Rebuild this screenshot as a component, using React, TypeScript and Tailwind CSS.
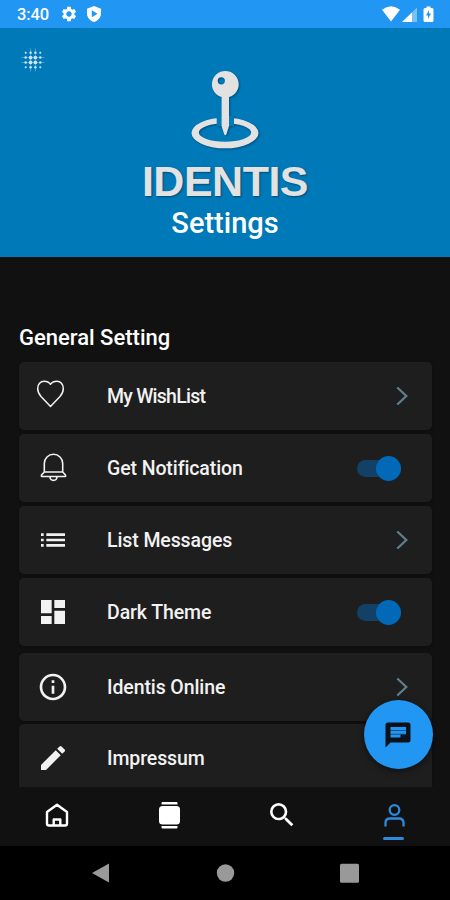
import type { ReactNode } from "react";
import { MdCreate, MdDashboard, MdInfoOutline, MdList, MdSearch, MdSettings } from "react-icons/md";

function StatusBar() {
  return (
    <div className="flex h-7 shrink-0 items-center bg-[#2196f3] pl-[17px] pr-4 text-white">
      <span className="mt-0.5 w-8 text-[16.5px] font-medium leading-none tracking-[-0.1px]">3:40</span>
      <MdSettings className="ml-[11px] size-[18px]" />
      <svg className="ml-[7px] size-[18px]" viewBox="0 0 18 18" fill="currentColor">
        <path fillRule="evenodd" d="M9 1 2 3.700v4.800c0 4 3 7.300 7 8.500 4-1.200 7-4.500 7-8.500V3.700zM6.800 5.300v7L12.500 8.800z" />
      </svg>
      <svg className="ml-auto h-[18px] w-[52px]" viewBox="0 0 52 18" fill="currentColor">
        <path d="M0 4.800Q9-2.500 18 4.800L9 16.500z" />
        <path d="M20 17 35 2.500V17z" opacity=".4" />
        <path d="M20 17 30 7.500V17z" />
        <path fillRule="evenodd" d="M44.500 1.500h4V3h1.500q1.500 0 1.500 1.500v11q0 1.500-1.500 1.500h-7q-1.500 0-1.500-1.500v-11Q41.500 3 43 3h1.500zM47 5l-3 5.500h2V14l3-5.500h-2z" />
      </svg>
    </div>
  );
}

// [x, y, radius] of each dot in the round grid
const dots = [
  [4.5, 4.5, 1], [9.2, 4.5, 1.2], [13.8, 4.5, 1.2], [18.5, 4.5, 1],
  [4.5, 9.2, 1.2], [9.2, 9.2, 1.8], [13.8, 9.2, 1.8], [18.5, 9.2, 1.2],
  [4.5, 13.8, 1.2], [9.2, 13.8, 1.8], [13.8, 13.8, 1.8], [18.5, 13.8, 1.2],
  [4.5, 18.5, 1], [9.2, 18.5, 1.2], [13.8, 18.5, 1.2], [18.5, 18.5, 1],
];

function DotGrid() {
  return (
    <svg className="absolute left-[21px] top-5 size-6" viewBox="0 0 23 23" fill="#ffffff" opacity=".8">
      <path d="M9.200 .5v22M13.800 .5v22M.5 9.200h22M.5 13.800h22" stroke="#ffffff" strokeWidth="1" opacity=".35" />
      {dots.map(([x, y, r]) => (
        <circle key={`${x}-${y}`} cx={x} cy={y} r={r} />
      ))}
    </svg>
  );
}

function Logo() {
  return (
    <svg className="h-20 w-[68px] drop-shadow-[1px_1px_1px_rgba(0,0,0,0.35)]" viewBox="0 0 68 80" fill="#e2e2e2">
      <path fillRule="evenodd" d="M.5 63a33.500 15.300 0 1 0 67 0a33.500 15.300 0 1 0-67 0M7.800 62.500a26.200 9.300 0 1 0 52.400 0a26.200 9.300 0 1 0-52.400 0" />
      <path d="M25.700 46h17.300v10H25.700z" fill="#0079b9" />
      <path fillRule="evenodd" d="M34.300 1a13.300 13.300 0 0 1 3.700 26.100V56l-2.500 8q-1.200 2.500-2.400 0L30.600 56V27.100A13.300 13.300 0 0 1 34.300 1M30.300 7.200a3.600 3.600 0 1 0 0 7.200 3.600 3.600 0 0 0 0-7.200" />
    </svg>
  );
}

function HeartIcon() {
  return (
    <svg className="-ml-[3px] -mt-1 size-8" viewBox="0 0 32 32" fill="none" stroke="currentColor" strokeWidth="1.500" strokeLinejoin="round">
      <path d="M16.500 28.500L7 18.500C4.800 16 3.700 13.500 3.700 10.500C3.700 6.200 6.500 3.300 10 3.300C13 3.300 15.300 4.500 16.500 6.300C17.700 4.500 20 3.300 23 3.300C26.500 3.300 29.300 6.200 29.300 10.500C29.300 13.500 28.200 16 26 18.500Z" />
    </svg>
  );
}

function BellIcon() {
  return (
    <svg className="size-8" viewBox="0 0 32 32" fill="none" stroke="currentColor" strokeWidth="1.600" strokeLinejoin="round">
      <path d="M7.300 20V11.500a9.200 9.200 0 0 1 18.400 0V20M7.300 20L4.500 23v1.500h24V23l-2.800-3zM13 25c.3 4.500 6.700 4.500 7 0" />
    </svg>
  );
}

function Chevron() {
  return (
    <svg className="h-5 w-3" viewBox="0 0 12 20" fill="none" stroke="#607d8b" strokeWidth="2.300">
      <path d="m1.300 1.500 9 8.500-9 8.500" />
    </svg>
  );
}

function Toggle() {
  return (
    <div className="mr-[7px] flex h-[17px] w-11 items-center justify-end rounded-full bg-[#124067]">
      <span className="size-[25px] shrink-0 rounded-full bg-[#0269b9]" />
    </div>
  );
}

function Row({ icon, label, right, className = "" }: { icon: ReactNode; label: ReactNode; right?: ReactNode; className?: string }) {
  return (
    <div className={`flex h-[68px] shrink-0 items-center rounded-[5px] bg-[#1e1e1e] pl-[18px] pr-6 tracking-[-0.1px] text-[#f2f2f2] shadow-[0_1px_3px_rgba(0,0,0,0.3)] ${className}`}>
      <div className="flex w-[70px] items-center">{icon}</div>
      <span className="flex-1 pt-0.5 text-[19.500px] font-medium">{label}</span>
      {right}
    </div>
  );
}

export default function App() {
  return (
    <div className="relative flex h-[900px] w-[450px] flex-col overflow-hidden bg-[#111111] font-['Roboto',sans-serif]">
      <StatusBar />

      <header className="relative flex h-[229px] shrink-0 flex-col items-center bg-[#0079b9] pt-[42px]">
        <DotGrid />
        <Logo />
        <div className="mt-1.5 font-['Liberation_Sans',sans-serif] text-[43px] font-bold leading-[50px] tracking-[-0.5px] text-[#e2e2e2] [text-shadow:1px_1px_2px_rgba(0,0,0,0.4)]">
          IDENTIS
        </div>
        <h1 className="text-[29px] font-medium leading-[34px] text-white">Settings</h1>
      </header>

      <main className="flex h-[530px] shrink-0 flex-col overflow-hidden pl-[19px] pr-[18px] pt-[67px]">
        <h2 className="mb-[10px] text-[22px] font-medium leading-7 text-white">General Setting</h2>
        <Row icon={<HeartIcon />} label={<span className="tracking-[-0.75px]">My WishList</span>} right={<Chevron />} />
        <Row className="mt-1" icon={<BellIcon />} label="Get Notification" right={<Toggle />} />
        <Row className="mt-1" icon={<MdList className="size-8" />} label="List Messages" right={<Chevron />} />
        <Row className="mt-1" icon={<MdDashboard className="size-8" />} label="Dark Theme" right={<Toggle />} />
        <Row className="mt-[7px]" icon={<MdInfoOutline className="size-8" />} label="Identis Online" right={<Chevron />} />
        <Row className="mt-[3px]" icon={<MdCreate className="size-8" />} label="Impressum" />
      </main>

      <nav className="grid h-[59px] shrink-0 grid-cols-4 justify-items-center pt-3 text-white">
        <svg className="size-8" viewBox="0 0 32 32" fill="none" stroke="currentColor" strokeWidth="2.400" strokeLinejoin="round">
          <path d="M7 13 17 5.800 27 13V24.500q0 2-2 2H9q-2 0-2-2zM13.700 26.500v-6h6.600v6" />
        </svg>
        <svg className="size-8" viewBox="0 0 32 32" fill="currentColor">
          <rect x="6" y="7" width="21" height="18.500" rx="3.500" />
          <path d="M9.500 3h14q1 0 1 1V5.500h-16V4q0-1 1-1M8.500 27h16V28.500q0 1-1 1h-14q-1 0-1-1z" />
        </svg>
        <MdSearch className="ml-0.5 size-8" />
        <div className="flex flex-col items-center text-[#2c8ade]">
          <svg className="size-8" viewBox="0 0 32 32" fill="none" stroke="currentColor" strokeWidth="2.300">
            <circle cx="16.500" cy="11" r="4.800" />
            <path d="M7.500 27.500v-3.500q0-4.500 4.500-4.500h9q4.500 0 4.500 4.500V27.500" />
          </svg>
          <span className="mt-[6px] h-[3px] w-[21px] rounded-full bg-current" />
        </div>
      </nav>

      <div className="flex-1 bg-black pt-[17px]">
        <svg className="h-5 w-full" viewBox="0 0 450 20" fill="#999999">
          <path d="M92 10 109 .5v19z" />
          <circle cx="225.500" cy="10" r="8.700" />
          <rect x="340" y=".7" width="19" height="19" rx="1.500" />
        </svg>
      </div>

      <button className="absolute bottom-[131px] right-[17.5px] flex size-[69px] items-center justify-center rounded-full bg-[#2196f3] shadow-[0_2px_6px_rgba(0,0,0,0.5)]">
        <svg className="size-[30px] text-[#0b121a]" viewBox="0 0 24 24" fill="currentColor">
          <path fillRule="evenodd" d="M4 2h16a2 2 0 0 1 2 2v12a2 2 0 0 1-2 2H6l-4 4V4q0-2 2-2M6 5.500v8.500h8v-2.500h4.500v-6z" />
          <path d="M6 8h12.500v.7H6zM6 11h12.500v.7H6z" opacity=".5" />
        </svg>
      </button>
    </div>
  );
}
